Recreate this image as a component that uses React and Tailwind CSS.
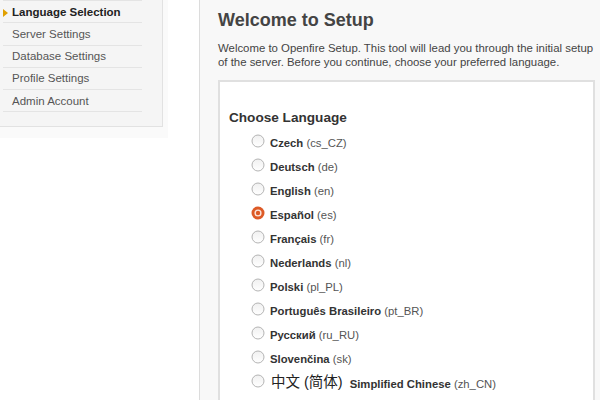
import React from "react";

const langs = [
  ["Czech", "(cs_CZ)"],
  ["Deutsch", "(de)"],
  ["English", "(en)"],
  ["Español", "(es)", true],
  ["Français", "(fr)"],
  ["Nederlands", "(nl)"],
  ["Polski", "(pl_PL)"],
  ["Português Brasileiro", "(pt_BR)"],
  ["Русский", "(ru_RU)"],
  ["Slovenčina", "(sk)"],
];

function Radio({ checked }) {
  if (checked) {
    return (
      <svg width="14" height="14" viewBox="0 0 14 14" className="shrink-0">
        <circle cx="7" cy="7" r="6.5" fill="#dd5a26" />
        <circle cx="7" cy="7" r="3.6" fill="#fbe6dc" />
        <circle cx="7" cy="7" r="2.2" fill="#dd5a26" />
      </svg>
    );
  }
  return (
    <svg width="14" height="14" viewBox="0 0 14 14" className="shrink-0">
      <defs>
        <linearGradient id="rg" x1="0" y1="0" x2="0" y2="1">
          <stop offset="0" stopColor="#f0f0f0" />
          <stop offset="1" stopColor="#ffffff" />
        </linearGradient>
      </defs>
      <circle cx="7" cy="7" r="6" fill="url(#rg)" stroke="#b4b4b4" strokeWidth="1" />
    </svg>
  );
}

export default function App() {
  const nav = ["Language Selection", "Server Settings", "Database Settings", "Profile Settings", "Admin Account"];
  return (
    <div
      className="flex w-[600px] h-[400px] overflow-hidden bg-white text-[#333]"
      style={{ fontFamily: '"Liberation Sans", Arial, sans-serif' }}
    >
      <div className="self-start w-[168px] shrink-0 bg-[#fafafa] pr-[5px] pb-[11px]">
        <div className="bg-[#f5f5f5] border-r border-b border-[#e2e2e2] pl-[3px] pr-[20px] pb-[14px]">
          <ul className="border-t border-[#e4e4e4]">
            {nav.map((n, i) => (
              <li
                key={n}
                className="relative h-[22.25px] border-b border-[#e4e4e4] flex items-center pl-[9px] pt-[1px] text-[11.5px]"
              >
                {i === 0 && (
                  <span className="absolute left-[0px] top-[8px] w-0 h-0 border-t-[4px] border-b-[4px] border-l-[5px] border-t-transparent border-b-transparent border-l-[#e0a000]" />
                )}
                <span className={i === 0 ? "font-bold text-[#222]" : "text-[#555]"}>{n}</span>
              </li>
            ))}
          </ul>
        </div>
      </div>
      <div className="ml-[31px] flex-1 min-w-0 bg-[#f8f8f8] border-l border-[#dcdcdc] pl-[18px] pt-[9px]">
        <h1 className="text-[18px] leading-[22px] font-bold text-[#444]">Welcome to Setup</h1>
        <p className="mt-[10px] text-[11.4px] leading-[14px] text-[#444] whitespace-nowrap">
          Welcome to Openfire Setup. This tool will lead you through the initial setup
          <br />
          of the server. Before you continue, choose your preferred language.
        </p>
        <div className="mt-[11px] w-[377px] h-[400px] bg-white border-2 border-[#e0e0e0] pt-[27px] pl-[9px]">
          <h2 className="text-[13.6px] leading-[18px] font-bold text-[#333]">Choose Language</h2>
          <div className="mt-[4px] pl-[22px]">
            {langs.map(([n, c, ch]) => (
              <div key={n} className="h-[24px] flex items-center gap-[5px] text-[11.3px]">
                <span className="-mt-[4px]"><Radio checked={ch} /></span>
                <span>
                  <b className="text-[#333]">{n}</b> <span className="text-[#555]">{c}</span>
                </span>
              </div>
            ))}
            <div className="h-[24px] flex items-center gap-[6px] text-[11.3px]">
              <span className="-mt-[4px]"><Radio /></span>
              <span
                className="text-[14.5px] text-[#222] mr-[1px]"
                style={{ fontFamily: '"Liberation Sans", "Noto Sans CJK SC", sans-serif' }}
              >
                中文 (简体)
              </span>
              <span className="mt-[3px]">
                <b className="text-[#333]">Simplified Chinese</b> <span className="text-[#555]">(zh_CN)</span>
              </span>
            </div>
          </div>
        </div>
      </div>
    </div>
  );
}
